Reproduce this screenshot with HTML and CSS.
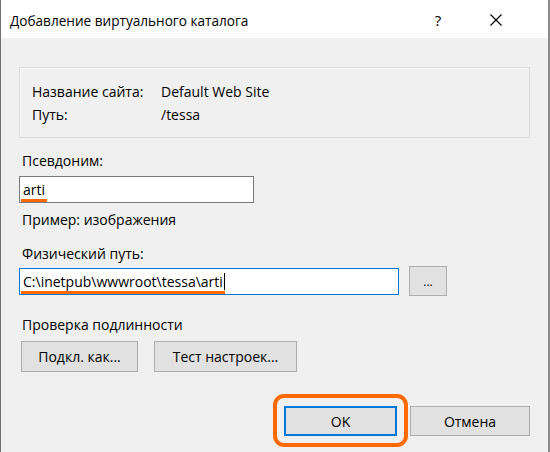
FILE: index.html
```html
<!DOCTYPE html>
<html lang="ru">
<head>
    <meta charset="UTF-8">
    <title>Добавление виртуального каталога</title>
    <link rel="stylesheet" href="styles.css">
</head>
<body>
    <div class="window">
        <!-- Заголовок окна -->
        <div class="titlebar">
            <span class="title">Добавление виртуального каталога</span>
            <span class="help">?</span>
            <span class="close">
                <svg width="12" height="12" viewBox="0 0 12 12">
                    <path d="M0.5 0.5 L11.5 11.5 M11.5 0.5 L0.5 11.5" stroke="#000" stroke-width="1.1" fill="none"/>
                </svg>
            </span>
        </div>

        <div class="content">
            <!-- Сведения о сайте -->
            <div class="info">
                <div class="info-row"><span class="info-label">Название сайта:</span><span>Default Web Site</span></div>
                <div class="info-row"><span class="info-label">Путь:</span><span>/tessa</span></div>
            </div>

            <div class="label label-alias">Псевдоним:</div>
            <div class="textbox alias"><span class="mark">arti</span></div>
            <div class="hint">Пример: изображения</div>

            <div class="label label-path">Физический путь:</div>
            <div class="path-row">
                <div class="textbox path focused"><span class="mark">C:\inetpub\wwwroot\tessa\arti</span><span class="caret"></span></div>
                <button class="btn browse">...</button>
            </div>

            <div class="label label-auth">Проверка подлинности</div>
            <div class="auth-row">
                <button class="btn connect">Подкл. как...</button>
                <button class="btn test">Тест настроек...</button>
            </div>

            <div class="footer">
                <button class="btn ok">OK</button>
                <button class="btn cancel">Отмена</button>
            </div>
        </div>
    </div>
</body>
</html>
```

FILE: styles.css
```css
* {
    margin: 0;
    padding: 0;
    box-sizing: border-box;
}

body {
    background: #ffffff;
    font-family: 'Open Sans', 'Noto Sans', sans-serif;
    font-size: 14px;
    color: #000;
}

.window {
    width: 550px;
    height: 452px;
    border-left: 1px solid #707070;
    border-right: 2px solid #8a8a8a;
    background: #f0f0f0;
    display: flex;
    flex-direction: column;
}

.titlebar {
    height: 38px;
    background: #ffffff;
    display: flex;
    align-items: center;
    padding-left: 9px;
    padding-top: 2px;
    font-size: 13.6px;
}

.title {
    flex: 1;
}

.help {
    width: 20px;
    text-align: center;
    margin-right: 42px;
    font-size: 15px;
}

.close {
    width: 12px;
    height: 12px;
    margin-right: 46px;
    display: flex;
}

.content {
    flex: 1;
    padding: 29px 17px 0 17px;
    display: flex;
    flex-direction: column;
}

.info {
    margin-left: 1px;
    width: 511px;
    height: 71px;
    border: 1px solid #dadada;
    box-shadow: inset 1px 1px 0 #fbfbfb;
    padding: 12px 0 0 12px;
}

.info-row {
    display: flex;
    height: 23px;
    align-items: center;
}

.info-label {
    width: 129px;
}

.label {
    margin-left: 4px;
    height: 20px;
    line-height: 20px;
}

.label-alias {
    margin-top: 13px;
}

.textbox {
    position: relative;
    background: #ffffff;
    border: 1px solid #7a7a7a;
    height: 27px;
    padding: 0 3px;
    display: flex;
    align-items: center;
}

.alias {
    width: 235px;
    margin-left: 1px;
    margin-top: 5px;
}

.focused {
    border-color: #0078d7;
}

/* оранжевое подчёркивание введённых значений */
.mark {
    position: relative;
}

.mark::after {
    content: "";
    position: absolute;
    left: -2px;
    right: -2px;
    bottom: -3px;
    height: 3px;
    background: #ff6a00;
}

.caret {
    display: inline-block;
    width: 1px;
    height: 17px;
    background: #000;
    margin-left: 1px;
}

.hint {
    margin-left: 4px;
    margin-top: 7px;
    height: 20px;
    line-height: 20px;
}

.label-path {
    margin-top: 14px;
}

.path-row {
    display: flex;
    align-items: center;
    margin-top: 2px;
}

.path {
    width: 380px;
    margin-left: 1px;
}

.btn {
    font-family: inherit;
    font-size: 14px;
    color: #000;
    background: #e1e1e1;
    border: 1px solid #adadad;
    height: 30px;
}

.browse {
    width: 38px;
    margin-left: 10px;
    font-size: 12px;
}

.label-auth {
    margin-top: 19px;
}

.auth-row {
    display: flex;
    margin-top: 6px;
    margin-left: 3px;
    gap: 16px;
}

.connect {
    width: 117px;
    height: 31px;
}

.test {
    width: 143px;
    height: 31px;
}

.footer {
    display: flex;
    margin-top: 34px;
    margin-left: 266px;
    gap: 13px;
}

.ok {
    position: relative;
    width: 113px;
    border: 2px solid #0078d7;
}

/* рамка-выделение вокруг кнопки OK */
.ok::after {
    content: "";
    position: absolute;
    left: -13px;
    right: -13px;
    top: -14px;
    bottom: -13px;
    border: 4px solid #ff6a00;
    border-radius: 11px;
}

.cancel {
    width: 120px;
}
```
